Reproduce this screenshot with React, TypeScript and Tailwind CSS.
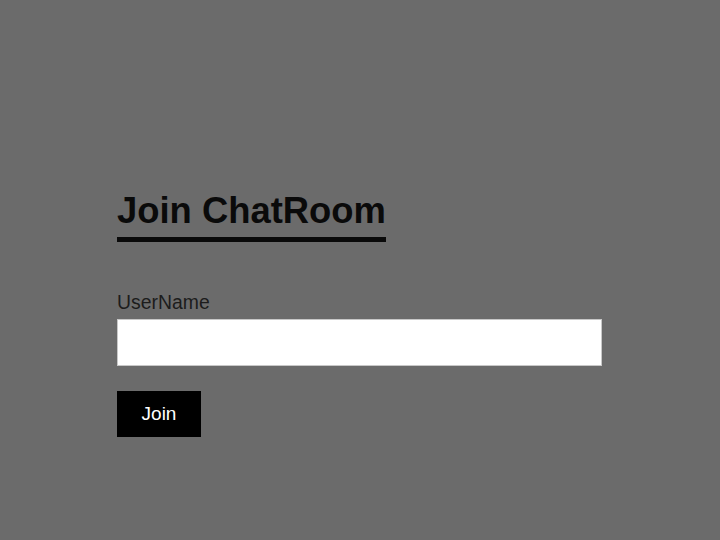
export default function App() {
  return (
    <div
      className="min-h-[540px] w-full bg-[#6b6b6b] pl-[117px] pt-[191px]"
      style={{ fontFamily: '"Liberation Sans", Arial, sans-serif' }}
    >
      <h1 className="inline-block border-b-[5px] border-[#0a0a0a] pb-[6px] text-[36.4px] font-bold leading-[40px] text-[#0a0a0a]">
        Join ChatRoom
      </h1>
      <form className="mt-[49px] flex flex-col" onSubmit={(e) => e.preventDefault()}>
        <label htmlFor="username" className="text-[19.4px] leading-[22px] text-[#1c1c1c]">
          UserName
        </label>
        <input
          id="username"
          type="text"
          className="mt-[6px] h-[47px] w-[485px] border border-[#c8c8c8] bg-white px-2 text-[18px] outline-none"
        />
        <button
          type="submit"
          className="mt-[25px] h-[46px] w-[84px] bg-black text-[19px] text-white"
        >
          Join
        </button>
      </form>
    </div>
  );
}
